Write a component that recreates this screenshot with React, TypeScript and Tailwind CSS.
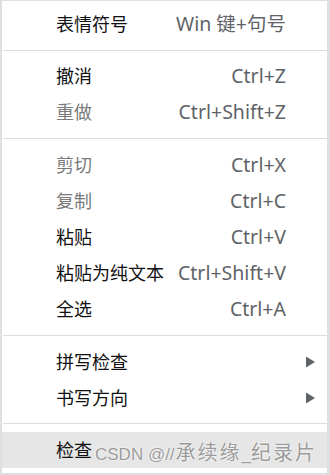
type Item = {
  label: string;
  shortcut?: string;
  disabled?: boolean;
  submenu?: boolean;
  active?: boolean;
};

const groups: Item[][] = [
  [{ label: '表情符号', shortcut: 'Win 键+句号' }],
  [
    { label: '撤消', shortcut: 'Ctrl+Z' },
    { label: '重做', shortcut: 'Ctrl+Shift+Z', disabled: true },
  ],
  [
    { label: '剪切', shortcut: 'Ctrl+X', disabled: true },
    { label: '复制', shortcut: 'Ctrl+C', disabled: true },
    { label: '粘贴', shortcut: 'Ctrl+V' },
    { label: '粘贴为纯文本', shortcut: 'Ctrl+Shift+V' },
    { label: '全选', shortcut: 'Ctrl+A' },
  ],
  [
    { label: '拼写检查', submenu: true },
    { label: '书写方向', submenu: true },
  ],
  [{ label: '检查', active: true }],
];

// spacing around separators is not quite even in the original
const sepClass = ['', 'mt-2 mb-[7px]', 'my-2', 'my-2', 'mt-[7px] mb-2'];

function Row({ item }: { item: Item }) {
  return (
    <div
      className={`relative flex h-9 items-center pl-[54px] pr-[41px] ${
        item.active ? 'bg-[#e6e6e6]' : ''
      }`}
    >
      <span className={`flex-1 ${item.disabled ? 'text-[#7a7a7a]' : 'text-[#111]'}`}>
        {item.label}
      </span>
      {item.shortcut && <span className="text-[19.5px] text-[#5f6368]">{item.shortcut}</span>}
      {item.submenu && (
        <svg className="absolute right-[12px] top-1/2 -translate-y-1/2" width="9" height="11" viewBox="0 0 9 11">
          <path d="M0 0 L9 5.5 L0 11 Z" fill="#5f6368" />
        </svg>
      )}
    </div>
  );
}

export default function App() {
  return (
    <div
      className="relative h-[475px] w-[330px] overflow-hidden border-b-2 border-l-2 border-r-[3px] border-t border-[#dfdfe3] bg-white pt-[5px] text-[18px]"
      style={{ fontFamily: '"Noto Sans", "Noto Sans CJK SC", sans-serif' }}
    >
      {groups.map((g, i) => (
        <div key={i}>
          {i > 0 && <div className={`ml-px h-px bg-[#dadce0] ${sepClass[i]}`} />}
          {g.map(item => (
            <Row key={item.label} item={item} />
          ))}
        </div>
      ))}
      <div
        className="absolute left-[93px] top-[439px] flex items-baseline whitespace-nowrap text-[20px] leading-6 text-[#9a9a9a] [text-shadow:0_0_2px_#fff,0_0_1px_#fff]"
        style={{ fontFamily: '"Noto Sans CJK SC", sans-serif' }}
      >
        <span
          className="text-[17px]"
          style={{ fontFamily: '"Liberation Sans", sans-serif' }}
        >
          CSDN @//
        </span>
        <span className="ml-[1px] tracking-[2px]">承续缘</span>
        <span
          className="text-[17px]"
          style={{ fontFamily: '"Liberation Sans", sans-serif' }}
        >
          _
        </span>
        <span className="tracking-[2px]">纪录片</span>
      </div>
    </div>
  );
}
